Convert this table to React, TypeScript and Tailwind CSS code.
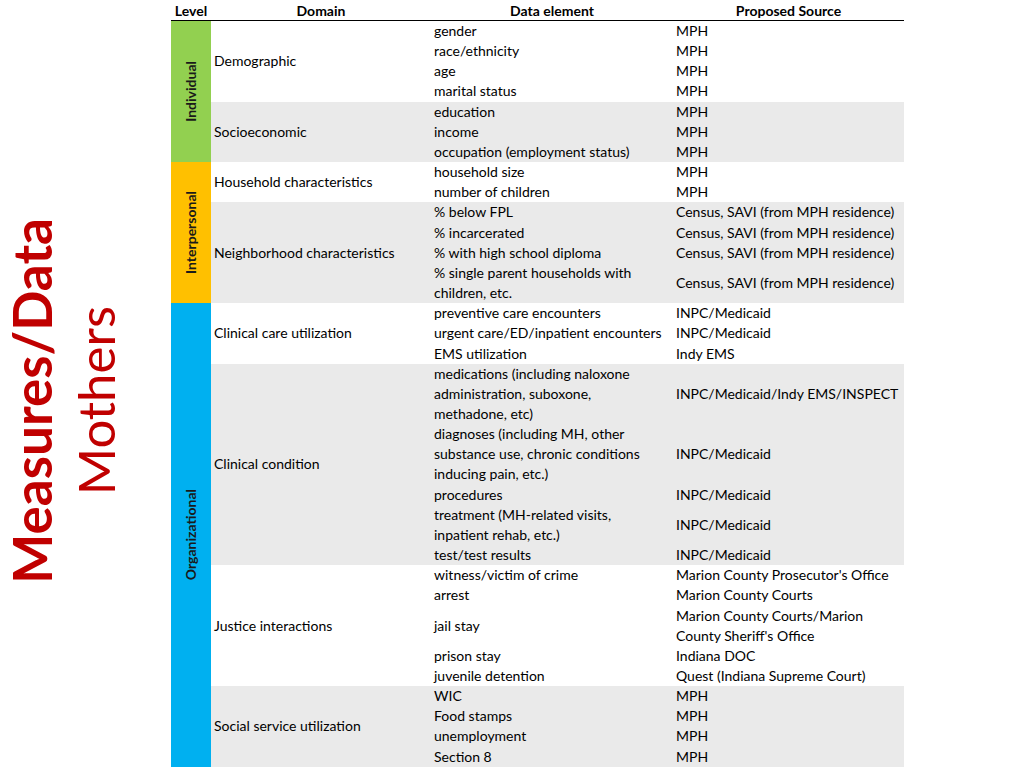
import React from "react";

type Item = { data: string[]; source: string[] };
type Group = { domain: string; gray: boolean; items: Item[] };
type Level = { name: string; color: string; groups: Group[] };

const I = (d: string | string[], s: string | string[]): Item => ({
  data: Array.isArray(d) ? d : [d],
  source: Array.isArray(s) ? s : [s],
});

const levels: Level[] = [
  {
    name: "Individual",
    color: "bg-[#92d050]",
    groups: [
      {
        domain: "Demographic",
        gray: false,
        items: [
          I("gender", "MPH"),
          I("race/ethnicity", "MPH"),
          I("age", "MPH"),
          I("marital status", "MPH"),
        ],
      },
      {
        domain: "Socioeconomic",
        gray: true,
        items: [
          I("education", "MPH"),
          I("income", "MPH"),
          I("occupation (employment status)", "MPH"),
        ],
      },
    ],
  },
  {
    name: "Interpersonal",
    color: "bg-[#ffc000]",
    groups: [
      {
        domain: "Household characteristics",
        gray: false,
        items: [I("household size", "MPH"), I("number of children", "MPH")],
      },
      {
        domain: "Neighborhood characteristics",
        gray: true,
        items: [
          I("% below FPL", "Census, SAVI (from MPH residence)"),
          I("% incarcerated", "Census, SAVI (from MPH residence)"),
          I("% with high school diploma", "Census, SAVI (from MPH residence)"),
          I(
            ["% single parent households with", "children, etc."],
            "Census, SAVI (from MPH residence)"
          ),
        ],
      },
    ],
  },
  {
    name: "Organizational",
    color: "bg-[#00b0f0]",
    groups: [
      {
        domain: "Clinical care utilization",
        gray: false,
        items: [
          I("preventive care encounters", "INPC/Medicaid"),
          I("urgent care/ED/inpatient encounters", "INPC/Medicaid"),
          I("EMS utilization", "Indy EMS"),
        ],
      },
      {
        domain: "Clinical condition",
        gray: true,
        items: [
          I(
            ["medications (including naloxone", "administration, suboxone,", "methadone, etc)"],
            "INPC/Medicaid/Indy EMS/INSPECT"
          ),
          I(
            ["diagnoses (including MH, other", "substance use, chronic conditions", "inducing pain, etc.)"],
            "INPC/Medicaid"
          ),
          I("procedures", "INPC/Medicaid"),
          I(["treatment (MH-related visits,", "inpatient rehab, etc.)"], "INPC/Medicaid"),
          I("test/test results", "INPC/Medicaid"),
        ],
      },
      {
        domain: "Justice interactions",
        gray: false,
        items: [
          I("witness/victim of crime", "Marion County Prosecutor's Office"),
          I("arrest", "Marion County Courts"),
          I("jail stay", ["Marion County Courts/Marion", "County Sheriff's Office"]),
          I("prison stay", "Indiana DOC"),
          I("juvenile detention", "Quest (Indiana Supreme Court)"),
        ],
      },
      {
        domain: "Social service utilization",
        gray: true,
        items: [
          I("WIC", "MPH"),
          I("Food stamps", "MPH"),
          I("unemployment", "MPH"),
          I("Section 8", "MPH"),
        ],
      },
    ],
  },
];

const Lines = ({ lines }: { lines: string[] }) => (
  <div>
    {lines.map((l, i) => (
      <div key={i} className="h-[20.17px] whitespace-nowrap">
        {l}
      </div>
    ))}
  </div>
);

export default function App() {
  return (
    <div
      className="w-[1024px] h-[768px] overflow-hidden bg-white flex text-[#000] text-[14px] leading-[20.17px]"
      style={{ fontFamily: "Lato, 'Open Sans', sans-serif" }}
    >
      {/* Left title */}
      <div className="w-[171px] shrink-0 flex items-center pl-[5px] gap-[12px] pt-[34px]">
        <div className="[writing-mode:vertical-rl] rotate-180 text-[#c00000] font-bold text-[53px] leading-[53px] whitespace-nowrap">
          Measures/Data
        </div>
        <div className="[writing-mode:vertical-rl] rotate-180 text-[#c00000] text-[51px] leading-[51px] whitespace-nowrap">
          Mothers
        </div>
      </div>

      {/* Table */}
      <div className="w-[733px] shrink-0 flex flex-col">
        <div className="h-[21px] flex font-bold border-b-[1.5px] border-black leading-[21px]">
          <div className="w-[40px] text-center">Level</div>
          <div className="w-[220px] text-center">Domain</div>
          <div className="w-[242px] text-center">Data element</div>
          <div className="w-[231px] text-center">Proposed Source</div>
        </div>
        {levels.map((lv) => (
          <div key={lv.name} className="flex">
            <div className={`w-[40px] shrink-0 ${lv.color} flex items-center justify-center`}>
              <div className="[writing-mode:vertical-rl] rotate-180 font-bold text-[14px] leading-[16px] text-[#1a1a1a] whitespace-nowrap">
                {lv.name}
              </div>
            </div>
            <div className="flex-1 flex flex-col">
              {lv.groups.map((g) => (
                <div key={g.domain} className={`flex ${g.gray ? "bg-[#eaeaea]" : "bg-white"}`}>
                  <div className="w-[220px] shrink-0 pl-[3px] flex items-center whitespace-nowrap">
                    {g.domain}
                  </div>
                  <div className="flex-1 flex flex-col">
                    {g.items.map((it, i) => (
                      <div key={i} className="flex">
                        <div className="w-[242px] shrink-0 pl-[3px] flex items-center">
                          <Lines lines={it.data} />
                        </div>
                        <div className="flex-1 pl-[3px] flex items-center">
                          <Lines lines={it.source} />
                        </div>
                      </div>
                    ))}
                  </div>
                </div>
              ))}
            </div>
          </div>
        ))}
      </div>
    </div>
  );
}
